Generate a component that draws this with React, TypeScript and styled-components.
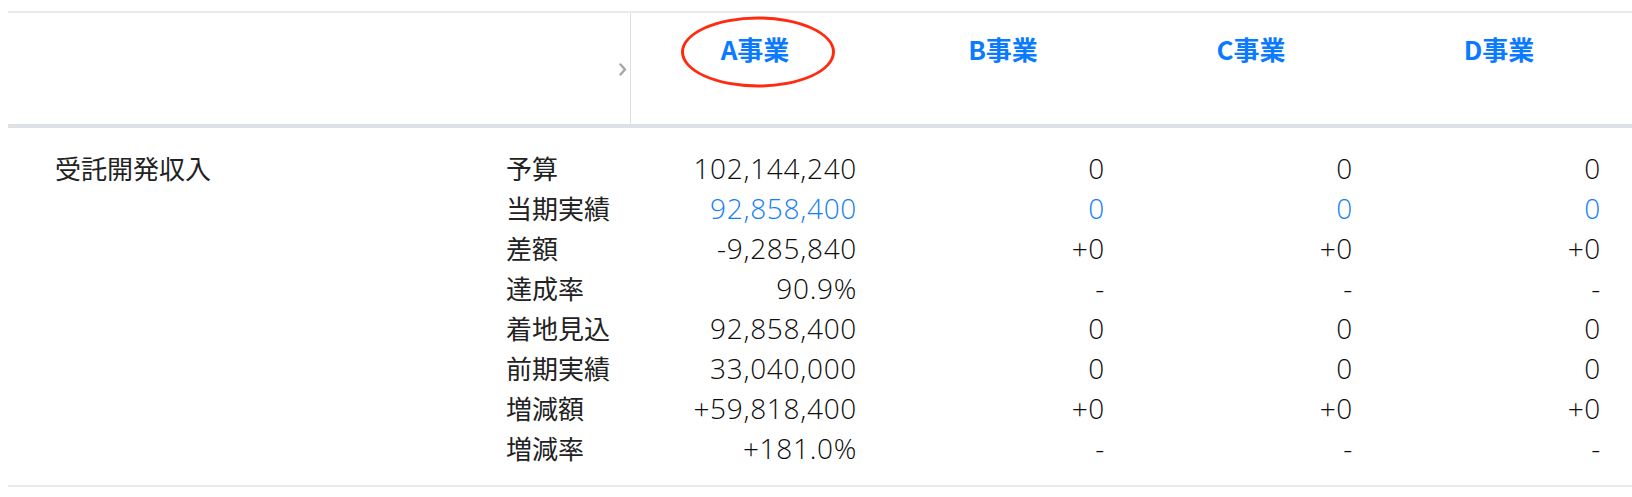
import React from "react";
import styled, { createGlobalStyle } from "styled-components";

const GlobalStyle = createGlobalStyle`
  html, body {
    margin: 0;
    padding: 0;
    background: #ffffff;
    overflow: hidden;
  }
  body {
    font-family: "Noto Sans CJK JP", "Noto Sans", sans-serif;
    color: #222222;
  }
`;

const Page = styled.div`
  padding: 11px 0 0 8px;
`;

const Table = styled.div`
  width: 1624px;
`;

const HeaderRow = styled.div`
  display: grid;
  grid-template-columns: 623px repeat(4, 248px) 1fr;
  height: 111px;
  border-top: 2px solid #e8eaed;
  border-bottom: 4px solid #dee2e7;
`;

const CornerCell = styled.div`
  display: flex;
  align-items: center;
  justify-content: flex-end;
  padding-right: 3px;
  border-right: 1px solid #dcdfe3;
`;

const Chevron = styled.svg`
  width: 8px;
  height: 13px;
  margin-top: 1px;
`;

const HeadCell = styled.div`
  display: flex;
  justify-content: center;
  align-items: flex-start;
  padding-top: 18px;
`;

const HeadLabel = styled.span`
  position: relative;
  font-size: 26px;
  font-weight: 700;
  line-height: 36px;
  color: #0a7aff;
`;

const Circle = styled.span`
  position: absolute;
  left: 50%;
  top: 50%;
  width: 148px;
  height: 65px;
  transform: translate(calc(-50% + 3px), calc(-50% + 3px));
  border: 3px solid #ff2a10;
  border-radius: 50%;
  pointer-events: none;
`;

const Body = styled.div`
  display: grid;
  grid-template-columns: 483px 140px repeat(4, 248px) 1fr;
  padding: 20px 0 17px;
  border-bottom: 2px solid #e8eaed;
`;

const CategoryCell = styled.div`
  padding-left: 47px;
  font-size: 26px;
  line-height: 40px;
  color: #222222;
`;

const Column = styled.div<{ $align: "left" | "right" }>`
  display: flex;
  flex-direction: column;
  text-align: ${(p) => p.$align};
  padding: ${(p) => (p.$align === "left" ? "0 0 0 15px" : "0 22px 0 0")};
`;

const Label = styled.div`
  font-size: 26px;
  line-height: 40px;
  height: 40px;
  white-space: nowrap;
  color: #222222;
`;

const Value = styled.div<{ $link?: boolean }>`
  font-family: "Open Sans", "Noto Sans", sans-serif;
  font-size: 28px;
  font-weight: 300;
  letter-spacing: 0.7px;
  line-height: 40px;
  height: 40px;
  white-space: nowrap;
  color: ${(p) => (p.$link ? "#167ef5" : "#0d0d0d")};
`;

const labels = ["予算", "当期実績", "差額", "達成率", "着地見込", "前期実績", "増減額", "増減率"];

const columns: { name: string; values: string[] }[] = [
  {
    name: "A事業",
    values: ["102,144,240", "92,858,400", "-9,285,840", "90.9%", "92,858,400", "33,040,000", "+59,818,400", "+181.0%"],
  },
  { name: "B事業", values: ["0", "0", "+0", "-", "0", "0", "+0", "-"] },
  { name: "C事業", values: ["0", "0", "+0", "-", "0", "0", "+0", "-"] },
  { name: "D事業", values: ["0", "0", "+0", "-", "0", "0", "+0", "-"] },
];

export default function App() {
  return (
    <Page>
      <GlobalStyle />
      <Table>
        <HeaderRow>
          <CornerCell>
            <Chevron viewBox="0 0 8 13" fill="none">
              <path d="M1.5 1.5 L6 6.5 L1.5 11.5" stroke="#a6a6a6" strokeWidth="2.4" strokeLinecap="round" strokeLinejoin="round" />
            </Chevron>
          </CornerCell>
          {columns.map((c, i) => (
            <HeadCell key={c.name}>
              <HeadLabel>
                {c.name}
                {i === 0 && <Circle />}
              </HeadLabel>
            </HeadCell>
          ))}
          <div />
        </HeaderRow>
        <Body>
          <CategoryCell>受託開発収入</CategoryCell>
          <Column $align="left">
            {labels.map((l) => (
              <Label key={l}>{l}</Label>
            ))}
          </Column>
          {columns.map((c) => (
            <Column key={c.name} $align="right">
              {c.values.map((v, j) => (
                <Value key={j} $link={j === 1}>
                  {v}
                </Value>
              ))}
            </Column>
          ))}
          <div />
        </Body>
      </Table>
    </Page>
  );
}
